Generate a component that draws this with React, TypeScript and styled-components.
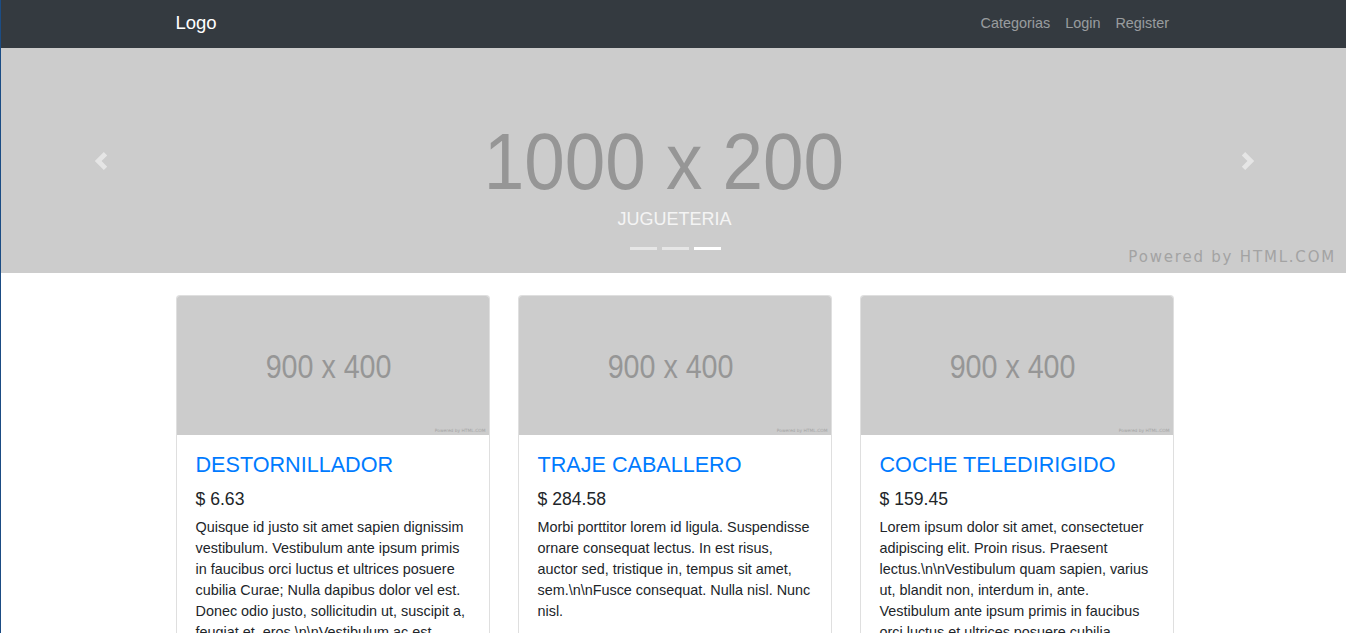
import React from 'react';
import styled, {createGlobalStyle} from 'styled-components';

type ProductType = {
    name: string
    price: string
    description: string
}

const products: ProductType[] = [
    {
        name: 'DESTORNILLADOR',
        price: '$ 6.63',
        description: 'Quisque id justo sit amet sapien dignissim vestibulum. Vestibulum ante ipsum primis in faucibus orci luctus et ultrices posuere cubilia Curae; Nulla dapibus dolor vel est. Donec odio justo, sollicitudin ut, suscipit a, feugiat et, eros.\\n\\nVestibulum ac est lacinia nisi venenatis tristique. Fusce congue, diam id ornare imperdiet, sapien urna pretium nisl, ut volutpat sapien arcu sed augue.'
    },
    {
        name: 'TRAJE CABALLERO',
        price: '$ 284.58',
        description: 'Morbi porttitor lorem id ligula. Suspendisse ornare consequat lectus. In est risus, auctor sed, tristique in, tempus sit amet, sem.\\n\\nFusce consequat. Nulla nisl. Nunc nisl.'
    },
    {
        name: 'COCHE TELEDIRIGIDO',
        price: '$ 159.45',
        description: 'Lorem ipsum dolor sit amet, consectetuer adipiscing elit. Proin risus. Praesent lectus.\\n\\nVestibulum quam sapien, varius ut, blandit non, interdum in, ante. Vestibulum ante ipsum primis in faucibus orci luctus et ultrices posuere cubilia Curae; Duis faucibus accumsan odio. Curabitur convallis.'
    },
]

const GlobalStyle = createGlobalStyle`
  html {
    overflow-x: hidden;
  }
  body {
    margin: 0;
    width: 1348px;
    border-left: 1px solid #1b4c84;
    font-family: "Liberation Sans", Arial, sans-serif;
    color: #212529;
    background: #fff;
  }
  * {
    box-sizing: border-box;
  }
`

const Container = styled.div`
  width: 998px;
  margin: 0 auto;
`

const Navbar = styled.nav`
  background-color: #343a40;
  height: 48px;
`

const NavInner = styled(Container)`
  height: 100%;
  display: flex;
  align-items: center;
  justify-content: space-between;
`

const Brand = styled.a`
  color: #fff;
  font-size: 18.5px;
  text-decoration: none;
  margin-top: -2px;
`

const NavLinks = styled.div`
  display: flex;
  margin-top: -2px;
  margin-right: -3px;
`

const NavLink = styled.a`
  color: rgba(255, 255, 255, .5);
  font-size: 14.4px;
  padding: 0 7.5px;
  text-decoration: none;
`

const Carousel = styled.div`
  position: relative;
  height: 225px;
  background-color: #cccccc;
  display: flex;
  align-items: center;
  justify-content: center;
  overflow: hidden;
`

const BigText = styled.div`
  color: #969696;
  font-size: 80px;
  line-height: 1;
  transform: scaleX(0.91);
  margin-right: 21px;
  margin-top: 3px;
  white-space: nowrap;
`

const Powered = styled.div<{size: number}>`
  position: absolute;
  right: ${props => props.size > 10 ? '12px' : '3px'};
  bottom: ${props => props.size > 10 ? '8px' : '2px'};
  font-family: "DejaVu Sans", sans-serif;
  font-size: ${props => props.size}px;
  letter-spacing: ${props => props.size > 10 ? '1.8px' : '0'};
  color: #a3a3a3;
  line-height: 1;
  white-space: nowrap;
`

const Caption = styled.div`
  position: absolute;
  top: 158px;
  left: 15%;
  right: 15%;
  text-align: center;
  color: #f4f4f4;
  font-size: 18px;
  line-height: 27px;
`

const Indicators = styled.div`
  position: absolute;
  top: 199px;
  left: 2px;
  right: 0;
  display: flex;
  justify-content: center;
  gap: 5px;
`

const Indicator = styled.span<{active?: boolean}>`
  width: 27px;
  height: 3px;
  background-color: ${props => props.active ? '#fff' : 'rgba(255, 255, 255, .5)'};
`

const Control = styled.a<{side: 'left' | 'right'}>`
  position: absolute;
  top: 0;
  bottom: 0;
  ${props => props.side}: 0;
  width: 200px;
  display: flex;
  align-items: center;
  justify-content: center;
  opacity: .5;
  margin-top: 1px;
`

const Cards = styled(Container)`
  display: grid;
  grid-template-columns: repeat(3, 314px);
  gap: 28px;
  margin-top: 22px;
`

const Card = styled.div`
  border: 1px solid rgba(0, 0, 0, .125);
  border-radius: 4px;
  background: #fff;
`

const CardImage = styled.div`
  position: relative;
  height: 139px;
  background-color: #cccccc;
  border-radius: 3px 3px 0 0;
  display: flex;
  align-items: center;
  justify-content: center;
`

const SmallText = styled.div`
  color: #969696;
  font-size: 33.5px;
  line-height: 1;
  transform: scaleX(0.855);
  margin-right: 8px;
  margin-top: 3px;
  white-space: nowrap;
`

const CardBody = styled.div`
  padding: 18px 19px 20px;
`

const Title = styled.h5`
  margin: 0 0 9px;
  font-size: 21.6px;
  line-height: 24px;
  font-weight: 400;
  color: #007bff;
`

const Price = styled.p`
  margin: 0 0 5px;
  font-size: 17.6px;
  line-height: 26px;
`

const Text = styled.p`
  margin: 0;
  font-size: 14.4px;
  line-height: 21px;
`

const Chevron = (props: {dir: 'prev' | 'next'}) => (
    <svg width="18" height="18" viewBox="0 0 8 8" fill="#fff">
        {props.dir === 'prev'
            ? <path d="M5.25 0l-4 4 4 4 1.5-1.5L4.25 4l2.5-2.5L5.25 0z"/>
            : <path d="M2.75 0l-1.5 1.5L3.75 4l-2.5 2.5L2.75 8l4-4-4-4z"/>}
    </svg>
)

export default function App() {
    return (
        <>
            <GlobalStyle/>
            <Navbar>
                <NavInner>
                    <Brand href="#">Logo</Brand>
                    <NavLinks>
                        <NavLink href="#">Categorias</NavLink>
                        <NavLink href="#">Login</NavLink>
                        <NavLink href="#">Register</NavLink>
                    </NavLinks>
                </NavInner>
            </Navbar>

            <Carousel>
                <BigText>1000 x 200</BigText>
                <Powered size={15}>Powered by HTML.COM</Powered>
                <Caption>JUGUETERIA</Caption>
                <Indicators>
                    <Indicator/>
                    <Indicator/>
                    <Indicator active/>
                </Indicators>
                <Control side="left" href="#"><Chevron dir="prev"/></Control>
                <Control side="right" href="#"><Chevron dir="next"/></Control>
            </Carousel>

            <Cards>
                {products.map(p =>
                    <Card key={p.name}>
                        <CardImage>
                            <SmallText>900 x 400</SmallText>
                            <Powered size={4.4}>Powered by HTML.COM</Powered>
                        </CardImage>
                        <CardBody>
                            <Title>{p.name}</Title>
                            <Price>{p.price}</Price>
                            <Text>{p.description}</Text>
                        </CardBody>
                    </Card>
                )}
            </Cards>
        </>
    );
}
